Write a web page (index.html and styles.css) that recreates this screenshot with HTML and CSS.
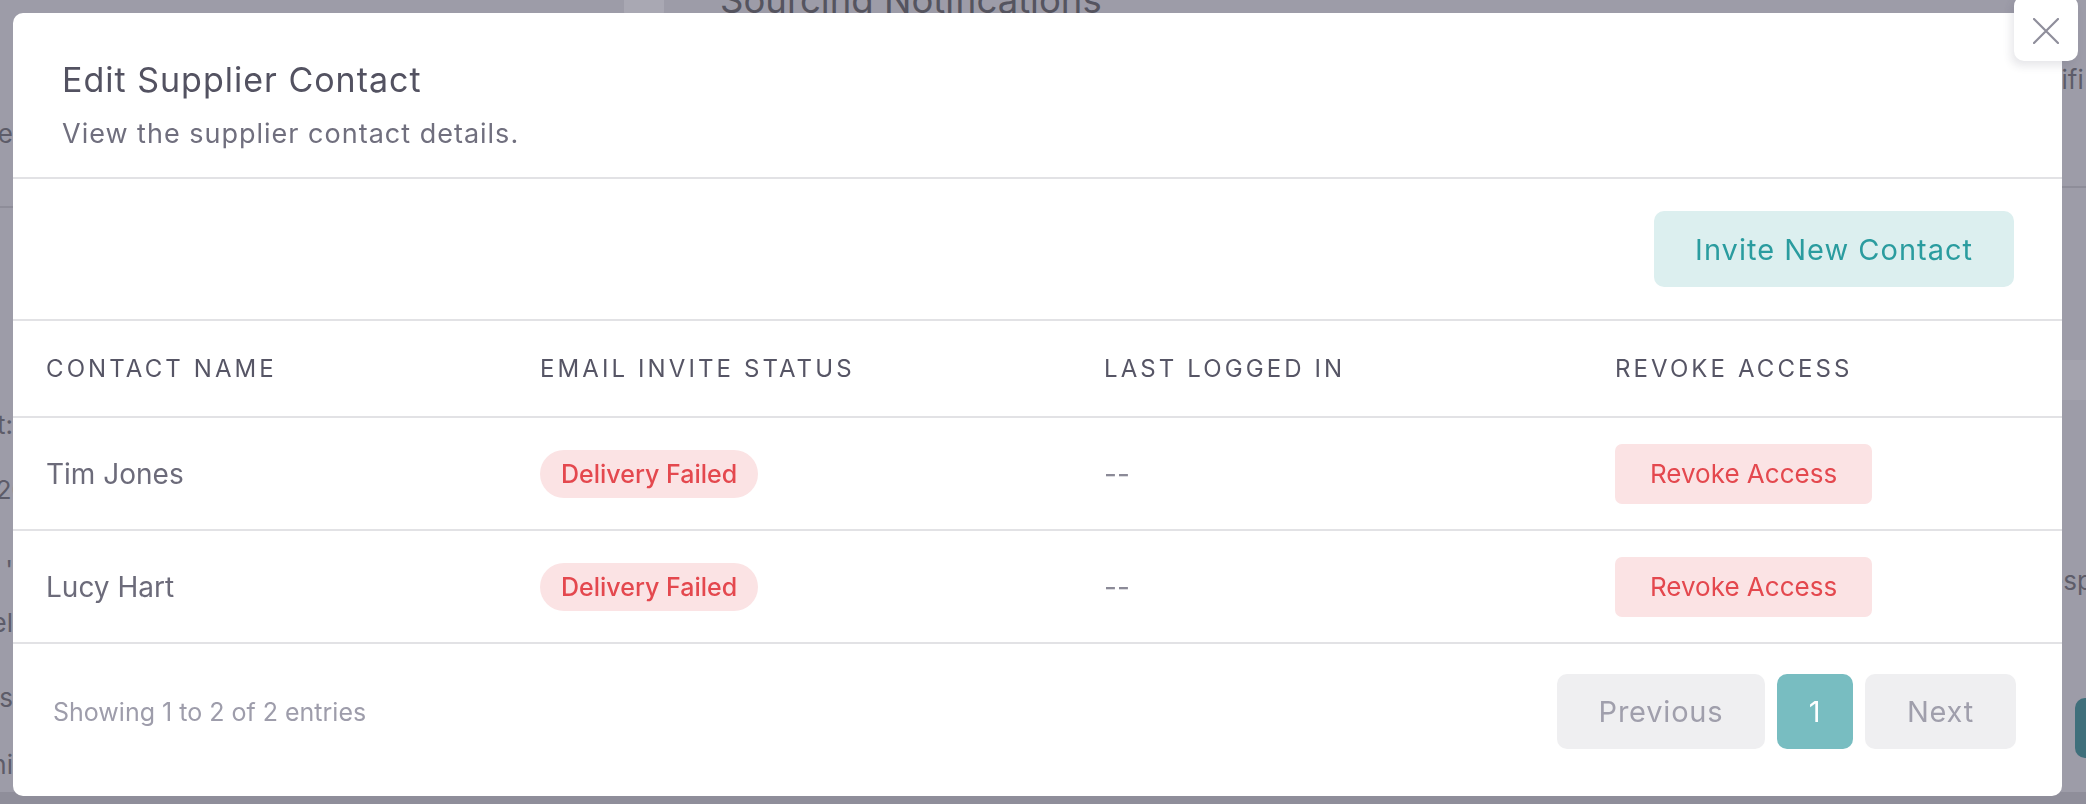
FILE: index.html
```html
<!DOCTYPE html>
<html lang="en">
<head>
<meta charset="utf-8">
<title>Edit Supplier Contact</title>
<link rel="stylesheet" href="styles.css">
</head>
<body>
<div class="page">
  <div class="page-left">
    <div class="bg-line l1">Name</div>
    <div class="bg-rule"></div>
    <div class="bg-line l2">Contact:</div>
    <div class="bg-line l3 cut">Date 20</div>
    <div class="bg-line l4">'</div>
    <div class="bg-line l5">Tel</div>
    <div class="bg-line l6">Status</div>
    <div class="bg-line l7">Admini</div>
  </div>
  <div class="page-center">
    <div class="bg-head"><span class="bg-icon"></span><span class="bg-title">Sourcing Notifications</span></div>
  </div>
  <div class="page-right">
    <div class="bg-line r1">tifi</div>
    <div class="bg-rule r-rule"></div>
    <div class="bg-box"></div>
    <div class="bg-line r2">esp</div>
    <div class="bg-btn"></div>
  </div>
</div>

<div class="overlay">
  <div class="modal">
    <div class="modal-header">
      <h2 class="modal-title">Edit Supplier Contact</h2>
      <p class="modal-subtitle">View the supplier contact details.</p>
    </div>
    <div class="toolbar">
      <button class="btn-invite">Invite New Contact</button>
    </div>
    <div class="table">
      <div class="tr thead">
        <div class="th">Contact Name</div>
        <div class="th">Email Invite Status</div>
        <div class="th">Last Logged In</div>
        <div class="th">Revoke Access</div>
      </div>
      <div class="tr">
        <div class="td name">Tim Jones</div>
        <div class="td"><span class="badge">Delivery Failed</span></div>
        <div class="td muted">--</div>
        <div class="td"><button class="btn-revoke">Revoke Access</button></div>
      </div>
      <div class="tr">
        <div class="td name">Lucy Hart</div>
        <div class="td"><span class="badge">Delivery Failed</span></div>
        <div class="td muted">--</div>
        <div class="td"><button class="btn-revoke">Revoke Access</button></div>
      </div>
    </div>
    <div class="footer">
      <div class="showing">Showing 1 to 2 of 2 entries</div>
      <div class="pager">
        <button class="pg pg-prev">Previous</button>
        <button class="pg pg-active">1</button>
        <button class="pg pg-next">Next</button>
      </div>
    </div>
  </div>
  <button class="close" aria-label="Close">
    <svg width="26" height="26" viewBox="0 0 26 26"><path d="M1 1 L25 25 M25 1 L1 25" stroke="#8f8e9b" stroke-width="2.2" fill="none" stroke-linecap="round"/></svg>
  </button>
</div>
</body>
</html>
```

FILE: styles.css
```css
* { box-sizing: border-box; }
html, body { margin: 0; padding: 0; }
body {
  width: 2086px;
  height: 804px;
  overflow: hidden;
  background: linear-gradient(#9d9ca8 0, #9d9ca8 792px, #8f8e9a 792px);
  font-family: "Inter", "Noto Sans", sans-serif;
  color: #555463;
}

/* background page (seen through overlay) */
.page {
  display: grid;
  grid-template-columns: 30px 1fr 40px;
  height: 804px;
}
.page-left {
  overflow: hidden;
  padding-top: 117px;
}
.bg-line {
  font-size: 26px;
  line-height: 34px;
  color: #5d5c69;
  white-space: nowrap;
}
.page-left .bg-line {
  display: flex;
  justify-content: flex-end;
  margin-right: 17px;
}
.page-left .bg-line.cut { margin-right: 2px; }
.bg-rule { height: 2px; background: #8e8d99; margin-top: 55px; }
.page-left .l2 { margin-top: 200px; }
.page-left .l3 { margin-top: 31px; }
.page-left .l4 { margin-top: 46px; }
.page-left .l5 { margin-top: 19px; }
.page-left .l6 { margin-top: 41px; }
.page-left .l7 { margin-top: 33px; }

.page-center { overflow: hidden; }
.bg-head {
  display: flex;
  align-items: center;
  gap: 56px;
  margin-top: -24px;
  margin-left: 594px;
}
.bg-icon { width: 40px; height: 40px; border-radius: 8px; background: #a9a8b3; }
.bg-title { font-size: 36.5px; line-height: 48px; color: #55545f; }

.page-right { overflow: hidden; padding-top: 63px; }
.page-right .bg-line { margin-left: 7px; }
.page-right .r-rule { margin-top: 89px; }
.bg-box { height: 40px; margin-top: 172px; background: #a4a3ae; }
.page-right .r2 { margin-top: 164px; margin-left: 2px; }
.bg-btn { height: 60px; margin-top: 100px; margin-left: 29px; border-radius: 10px 0 0 10px; background: #3f6f7b; }

/* overlay */
.overlay {
  position: fixed;
  inset: 0;
  display: flex;
  padding: 13px 24px 8px 13px;
}
.modal {
  flex: 1;
  background: #ffffff;
  border-radius: 10px;
  display: flex;
  flex-direction: column;
  overflow: hidden;
}
.modal-header {
  padding: 47px 49px 26px 49px;
  border-bottom: 2px solid #e2e2e5;
}
.modal-title {
  margin: 0;
  font-size: 34px;
  line-height: 40px;
  font-weight: 400;
  letter-spacing: 1px;
  color: #535261;
}
.modal-subtitle {
  margin: 17px 0 0 0;
  font-size: 27px;
  line-height: 34px;
  letter-spacing: 1px;
  color: #706f7e;
}

.toolbar {
  display: flex;
  justify-content: flex-end;
  padding: 32px 48px;
  border-bottom: 2px solid #e2e2e5;
}
.btn-invite {
  height: 76px;
  padding: 0 41px;
  border: 0;
  border-radius: 10px;
  background: #dcefef;
  color: #2a9c9f;
  font-family: inherit;
  font-size: 29px;
  letter-spacing: 1px;
}

.tr {
  display: grid;
  grid-template-columns: 494px 564px 511px 1fr;
  height: 113px;
  border-bottom: 2px solid #e2e2e5;
  align-items: center;
}
.tr.thead { height: 97px; }
.th, .td { padding-left: 33px; }
.th {
  font-size: 24px;
  letter-spacing: 3.1px;
  text-transform: uppercase;
  color: #565565;
}
.td { font-size: 28px; color: #6c6b7a; }
.td.muted { color: #8b8a97; }
.badge {
  display: inline-flex;
  align-items: center;
  height: 48px;
  padding: 0 21px;
  border-radius: 24px;
  background: #fbe3e4;
  color: #e4484e;
  font-size: 25px;
  font-weight: 500;
}
.btn-revoke {
  height: 60px;
  padding: 0 35px;
  border: 0;
  border-radius: 7px;
  background: #fbe3e4;
  color: #e4484e;
  font-family: inherit;
  font-size: 26px;
}

.footer {
  flex: 1;
  display: flex;
  justify-content: space-between;
  align-items: flex-start;
  padding: 30px 46px 0 40px;
}
.showing {
  height: 75px;
  display: flex;
  align-items: center;
  font-size: 25px;
  color: #9e9dab;
}
.pager { display: flex; gap: 12px; }
.pg {
  height: 75px;
  border: 0;
  border-radius: 10px;
  font-family: inherit;
  font-size: 29px;
  letter-spacing: 0.8px;
  background: #efeff1;
  color: #a09fac;
}
.pg-prev { width: 208px; }
.pg-active { width: 76px; background: #78bdc1; color: #ffffff; }
.pg-next { width: 151px; }

.close {
  position: fixed;
  left: 2014px;
  top: -4px;
  width: 64px;
  height: 65px;
  border: 0;
  border-radius: 10px;
  background: #ffffff;
  box-shadow: -3px 5px 8px rgba(60, 60, 80, 0.12);
  display: flex;
  align-items: center;
  justify-content: center;
  padding: 4px 0 0 0;
}
```
